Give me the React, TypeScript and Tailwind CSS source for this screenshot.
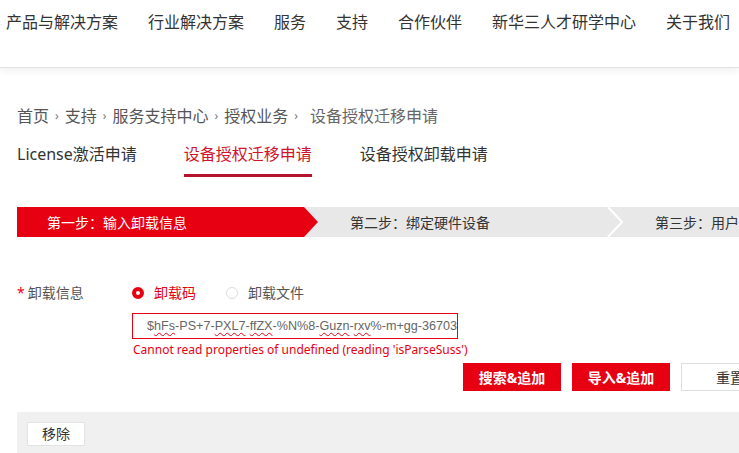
const navItems = ["产品与解决方案", "行业解决方案", "服务", "支持", "合作伙伴", "新华三人才研学中心", "关于我们"];
const crumbs = ["首页", "支持", "服务支持中心", "授权业务"];

const codeParts: { t: string; typo?: boolean }[] = [
  { t: "$" },
  { t: "hFs", typo: true },
  { t: "-PS+7-" },
  { t: "PXL7", typo: true },
  { t: "-" },
  { t: "ffZX", typo: true },
  { t: "-%N%8-" },
  { t: "Guzn", typo: true },
  { t: "-" },
  { t: "rxv", typo: true },
  { t: "%-m+" },
  { t: "gg", typo: true },
  { t: "-36703" },
];

const App = () => {
  return (
    <div className="w-[739px] h-[453px] overflow-hidden bg-white font-['Noto_Sans','Noto_Sans_CJK_SC',sans-serif] text-[#333]">
      {/* top nav */}
      <div className="h-[68px] border-b border-[#e2e2e2] shadow-[0_3px_8px_rgba(0,0,0,0.06)] flex items-start pt-[10px] pl-[6px] gap-[30px] whitespace-nowrap">
        {navItems.map((item, i) => (
          <span key={i} className="text-[16px] leading-[24px] text-[#333]">
            {item}
          </span>
        ))}
      </div>

      <div className="pl-[17px]">
        {/* breadcrumb */}
        <div className="mt-[36px] flex items-center text-[16px] leading-[24px] text-[#555] whitespace-nowrap">
          {crumbs.map((c, i) => (
            <span key={i} className="flex items-center">
              {c}
              <span className="mx-[6px] text-[12px] text-[#777]">›</span>
            </span>
          ))}
          <span className="ml-[6px] text-[#666]">设备授权迁移申请</span>
        </div>

        {/* tabs */}
        <div className="mt-[14px] flex text-[16px] leading-[24px] whitespace-nowrap">
          <span className="text-[#333]">License激活申请</span>
          <span className="ml-[47px] text-[#d0142c] border-b-[3px] border-[#b5142b] pb-[8px]">设备授权迁移申请</span>
          <span className="ml-[48px] text-[#333]">设备授权卸载申请</span>
        </div>

        {/* steps */}
        <div className="mt-[30px] flex h-[30px] bg-[#e8e8e8] text-[14px] whitespace-nowrap">
          <div className="w-[301px] shrink-0 bg-[#e60012] text-white pl-[30px] flex items-center [clip-path:polygon(0_0,287px_0,301px_50%,287px_100%,0_100%)]">
            第一步：输入卸载信息
          </div>
          <div className="w-[289px] shrink-0 pl-[32px] flex items-center text-[#333]">第二步：绑定硬件设备</div>
          <svg width="16" height="30" viewBox="0 0 16 30" className="shrink-0">
            <polyline points="1,0 15,15 1,30" fill="none" stroke="#ffffff" strokeWidth="2" />
          </svg>
          <div className="shrink-0 pl-[32px] flex items-center text-[#333]">第三步：用户信息确认</div>
        </div>

        {/* form */}
        <div className="mt-[46px] flex items-center text-[14px] leading-[20px] whitespace-nowrap">
          <span className="w-[115px] shrink-0 text-[#555]">
            <span className="text-[#e60012] mr-[3px]">*</span>卸载信息
          </span>
          <span className="flex items-center">
            <span className="w-[12px] h-[12px] rounded-full border-[4px] border-[#e60012] bg-white" />
            <span className="ml-[10px] text-[#e60012]">卸载码</span>
          </span>
          <span className="ml-[30px] flex items-center">
            <span className="w-[12px] h-[12px] rounded-full border border-[#dcdcdc] bg-white" />
            <span className="ml-[10px] text-[#555]">卸载文件</span>
          </span>
        </div>

        <div className="ml-[115px] mt-[10px] w-[326px] h-[26px] border border-[#e60012] flex items-center pl-[13px] text-[12.6px] text-[#666] font-['Liberation_Sans',sans-serif] whitespace-nowrap overflow-hidden">
          <span className="w-px h-[15px] bg-[#333] mr-[1px]" />
          {codeParts.map((p, i) => (
            <span key={i} className={p.typo ? "underline decoration-wavy decoration-[#e60012] decoration-1 underline-offset-2" : ""}>
              {p.t}
            </span>
          ))}
        </div>
        <div className="ml-[116px] mt-[2px] text-[12px] leading-[18px] text-[#e60012] whitespace-nowrap">
          Cannot read properties of undefined (reading 'isParseSuss')
        </div>

        {/* buttons */}
        <div className="mt-[4px] ml-[446px] flex gap-[11px] text-[14px] whitespace-nowrap">
          <button className="w-[98px] h-[28px] shrink-0 bg-[#e60012] text-white font-bold">搜索&amp;追加</button>
          <button className="w-[98px] h-[28px] shrink-0 bg-[#e60012] text-white font-bold">导入&amp;追加</button>
          <button className="w-[98px] h-[28px] shrink-0 bg-white border border-[#dddddd] text-[#333]">重置</button>
        </div>

        {/* table toolbar */}
        <div className="mt-[21px] h-[60px] bg-[#f0f0f0] pt-[9px] pl-[10px]">
          <button className="w-[58px] h-[24px] bg-white border border-[#e3e3e3] text-[14px] text-[#333]">移除</button>
        </div>
      </div>
    </div>
  );
};

export default App;
